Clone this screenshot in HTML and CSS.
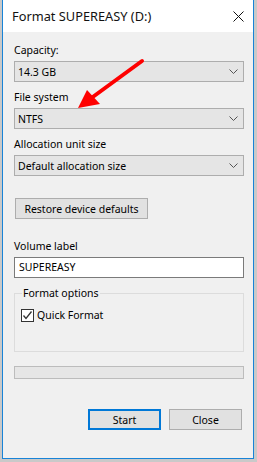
FILE: index.html
```html
<!DOCTYPE html>
<html lang="en">
<head>
    <meta charset="UTF-8">
    <meta name="viewport" content="width=device-width, initial-scale=1.0">
    <title>Format SUPEREASY (D:)</title>
    <link rel="stylesheet" href="styles.css">
</head>
<body>
    <div class="window">
        <div class="titlebar">
            <span class="title">Format SUPEREASY (D:)</span>
            <svg class="close-icon" width="11" height="11" viewBox="0 0 11 11">
                <path d="M0.5 0.5L10.5 10.5M10.5 0.5L0.5 10.5" stroke="#111" stroke-width="1" fill="none"/>
            </svg>
        </div>
        <div class="content">
            <div class="field">
                <div class="field-label">Capacity:</div>
                <div class="combo">
                    <span>14.3 GB</span>
                    <svg class="chevron" width="9" height="5" viewBox="0 0 9 5"><path d="M0.5 0.5L4.5 4.5L8.5 0.5" stroke="#555" fill="none"/></svg>
                </div>
            </div>
            <div class="field">
                <div class="field-label">File system</div>
                <div class="combo">
                    <span>NTFS</span>
                    <svg class="chevron" width="9" height="5" viewBox="0 0 9 5"><path d="M0.5 0.5L4.5 4.5L8.5 0.5" stroke="#555" fill="none"/></svg>
                </div>
            </div>
            <div class="field">
                <div class="field-label">Allocation unit size</div>
                <div class="combo">
                    <span>Default allocation size</span>
                    <svg class="chevron" width="9" height="5" viewBox="0 0 9 5"><path d="M0.5 0.5L4.5 4.5L8.5 0.5" stroke="#555" fill="none"/></svg>
                </div>
            </div>

            <button class="btn restore-btn">Restore device defaults</button>

            <div class="field volume">
                <div class="field-label">Volume label</div>
                <div class="text-input">SUPEREASY</div>
            </div>

            <fieldset class="options">
                <legend>Format options</legend>
                <div class="check">
                    <span class="check-box">
                        <svg width="11" height="11" viewBox="0 0 11 11"><path d="M1.5 5.5L4 8.5L9.5 1.5" stroke="#333" stroke-width="1.3" fill="none"/></svg>
                    </span>
                    <span>Quick Format</span>
                </div>
            </fieldset>

            <div class="progress"></div>

            <div class="actions">
                <button class="btn primary">Start</button>
                <button class="btn">Close</button>
            </div>
        </div>
    </div>

    <!-- red pointer drawn on top of the screenshot -->
    <svg class="annotation" width="257" height="462" viewBox="0 0 257 462">
        <line x1="142" y1="61" x2="90" y2="99" stroke="#fe0000" stroke-width="4" stroke-linecap="round"/>
        <polygon points="78,108 87,90 100,104" fill="#fe0000"/>
    </svg>
</body>
</html>
```

FILE: styles.css
```css
body {
    margin: 0;
    padding: 0;
    width: 257px;
    height: 462px;
    background-color: #c9c9c9;
    font-family: "Noto Sans", "Open Sans", sans-serif;
    font-size: 10.5px;
    color: #000;
    position: relative;
    overflow: hidden;
}
.window {
    margin-left: 2px;
    width: 252px;
    height: 459px;
    box-sizing: border-box;
    border: 1px solid #1883d7;
    border-top: none;
    background-color: #f0f0f0;
}
.titlebar {
    height: 32px;
    background-color: #fff;
    display: flex;
    align-items: center;
    justify-content: space-between;
    padding: 0 9px 0 9px;
}
.title {
    font-size: 12.8px;
    color: #111;
}
.close-icon {
    display: block;
    margin-top: 1px;
}
.content {
    padding: 11px 9px 0 11px;
}
.field {
    margin-bottom: 8px;
}
.field-label {
    line-height: 15px;
    margin-bottom: 3px;
}
.combo {
    height: 21px;
    box-sizing: border-box;
    border: 1px solid #adadad;
    background-color: #e5e5e5;
    display: flex;
    align-items: center;
    justify-content: space-between;
    padding: 0 5px 0 3px;
}
.chevron {
    display: block;
}
.btn {
    font-family: inherit;
    font-size: 10.5px;
    color: #000;
    height: 21px;
    box-sizing: border-box;
    border: 1px solid #adadad;
    background-color: #e1e1e1;
    padding: 0;
    margin: 0;
}
.restore-btn {
    display: block;
    margin-top: 22px;
    margin-left: 1px;
    width: 133px;
}
.volume {
    margin-top: 20px;
}
.text-input {
    height: 21px;
    box-sizing: border-box;
    border: 1px solid #7a7a7a;
    background-color: #fff;
    padding: 0 4px;
    line-height: 19px;
}
.options {
    margin: 8px 0 0 0;
    padding: 0 6px 29px 6px;
    border: 1px solid #dcdcdc;
    min-width: 0;
}
.options legend {
    padding: 0 1px;
    margin-left: 1px;
    line-height: 15px;
}
.check {
    display: flex;
    align-items: center;
    gap: 3px;
    margin-top: 7px;
}
.check-box {
    width: 13px;
    height: 13px;
    box-sizing: border-box;
    border: 1px solid #333;
    background-color: #fff;
    display: flex;
    align-items: center;
    justify-content: center;
}
.check-box svg {
    display: block;
}
.progress {
    margin-top: 14px;
    height: 13px;
    box-sizing: border-box;
    border: 1px solid #bcbcbc;
    background-color: #e6e6e6;
}
.actions {
    display: flex;
    justify-content: flex-end;
    gap: 8px;
    margin-top: 30px;
    padding-right: 2px;
}
.actions .btn {
    width: 73px;
}
.btn.primary {
    border: 2px solid #0078d7;
}
.annotation {
    position: absolute;
    top: 0;
    left: 0;
    pointer-events: none;
}
```
